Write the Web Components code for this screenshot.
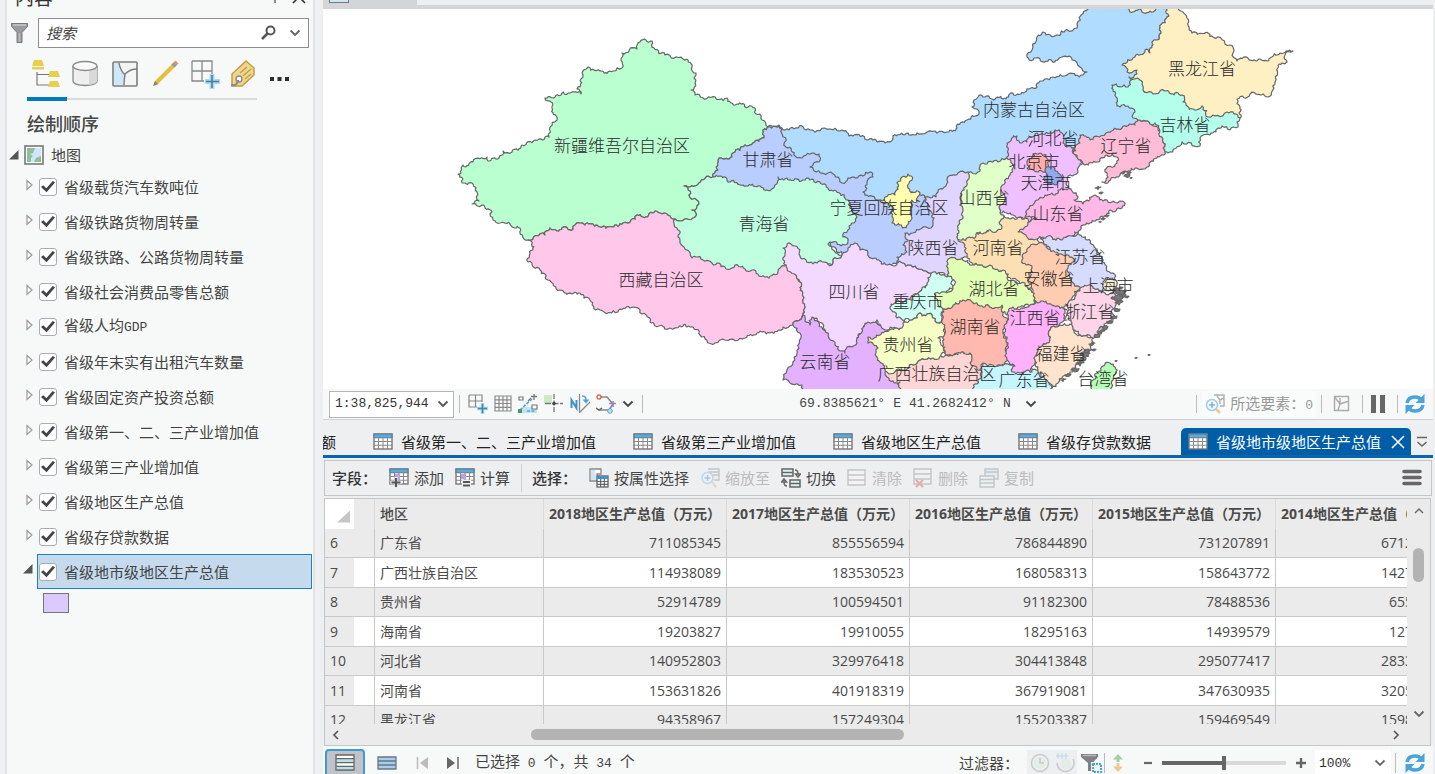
<!DOCTYPE html>
<html lang="zh-CN">
<head>
<meta charset="utf-8">
<title>省级地市级地区生产总值</title>
<style>
html,body{margin:0;height:100%;overflow:hidden;background:#eeeff1}
body{font-family:"Noto Sans CJK SC","Noto Sans",sans-serif;font-size:15px;line-height:20px;color:#444}
</style>
</head>
<body>
<gis-app></gis-app>
<script>
const BASE = `
*{box-sizing:border-box}
button{font:inherit;color:inherit;background:none;border:0;padding:0;margin:0;display:inline-flex;align-items:center;justify-content:center}
input,select{font:inherit;color:inherit;margin:0}
.mono{font-family:"Liberation Mono","Noto Sans CJK SC",monospace;font-size:13px;white-space:pre}
`;
function define(name, css, html, after) {
  const tpl = document.createElement('template');
  tpl.innerHTML = `<style>${BASE}${css}</style>${typeof html === 'string' ? html : ''}`;
  customElements.define(name, class extends HTMLElement {
    connectedCallback() {
      if (this.shadowRoot) return;
      const root = this.attachShadow({ mode: 'open' });
      root.append(tpl.content.cloneNode(true));
      if (typeof html === 'function') root.innerHTML += html(this);
      if (after) after(this, root);
    }
  });
}

/* ---------- icons ---------- */
const grid = (x, y, w, h, extra = '') => `
<rect x="${x}" y="${y}" width="${w}" height="${h}" fill="#fff" stroke="#777" stroke-width="1.4"/>
<rect x="${x}" y="${y}" width="${w}" height="${h / 4}" fill="#5fa8d8" stroke="#5b7d94"/>
<path d="M${x + w / 4} ${y + h / 4}v${h * .75}M${x + w / 2} ${y + h / 4}v${h * .75}M${x + w * .75} ${y + h / 4}v${h * .75}M${x} ${y + h / 2}h${w}M${x} ${y + h * .75}h${w}" stroke="#888" fill="none"/>${extra}`;
const refresh = `<g fill="none" stroke="#4ba3dc" stroke-width="3.6"><path d="M2 9c1-5 5-6 8-6 3 0 5 1 6 3"/><path d="M18 11c-1 5-5 6-8 6-3 0-5-1-6-3"/></g><path d="M19.500 0v9h-9zM.5 20v-9h9z" fill="#4ba3dc"/>`;
const ICONS = {
  funnel: [20, 22, `<path d="M1.500 1.500h16v3l-5.500 6v10h-5v-10l-5.500-6z" fill="#9a9a9f" stroke="#77777c"/><path d="M3 3h13" stroke="#c9c9cd" stroke-width="1.500"/><path d="M9.500 11v9" stroke="#bdbdc2" stroke-width="1.500"/>`],
  search: [16, 16, `<circle cx="9.500" cy="5.500" r="4" fill="none" stroke="#555" stroke-width="2"/><path d="M6.500 8.500L1 14" stroke="#555" stroke-width="2.600"/>`],
  chevron: [12, 8, `<path d="M1.500 1.500L6 6l4.500-4.500" fill="none" stroke="currentColor" stroke-width="1.800"/>`],
  up: [12, 8, `<path d="M2 6l4-4 4 4" fill="none" stroke="#666" stroke-width="1.400"/>`],
  left: [8, 12, `<path d="M6 2L2 6l4 4" fill="none" stroke="#555" stroke-width="1.600"/>`],
  right: [8, 12, `<path d="M2 2l4 4-4 4" fill="none" stroke="#555" stroke-width="1.600"/>`],
  pin: [10, 14, `<path d="M1 8h8M5 8v5M3 1v7M7 1v7" stroke="#666" stroke-width="1.500"/>`],
  close: [14, 14, `<path d="M1 1l12 12M13 1L1 13" stroke="currentColor" stroke-width="1.600"/>`],
  order: [30, 30, `<path d="M7 13v13h14M7 15.500h14" fill="none" stroke="#777" stroke-width="1.200"/><path d="M4 1h8l2 6H2zM2 8h12v2.500H2z" fill="#e8cf4e"/><path d="M20 12h8l2 6H18zM20 22h8l2 6H18z" fill="#e8cf4e"/>`],
  source: [30, 30, `<path d="M3 7v15c0 6 24 6 24 0V7" fill="#eee" stroke="#8a8a8a" stroke-width="1.300"/><path d="M19 11v15c5-1 8-2 8-4V7c0 2-3 3-8 4z" fill="#d8d8d8"/><ellipse cx="15" cy="7" rx="12" ry="4.500" fill="#fafafa" stroke="#8a8a8a" stroke-width="1.300"/>`],
  select: [30, 30, `<rect x="3" y="3" width="24" height="24" rx="1" fill="#f4f4f4" stroke="#7c7c7c" stroke-width="1.600"/><path d="M4 4h5c1 6 3 9 6 12-1 4-1 6-1 10H4z" fill="#cfe8f8"/><path d="M9 4c1 6 3 9 6 12-1 4-1 6-1 10M15 15c4-4 7-5 12-5" fill="none" stroke="#7c7c7c" stroke-width="1.400"/>`],
  pencil: [30, 30, `<path d="M5 22L23 4l3 3L8 25l-5 2z" fill="#e3c03d"/><path d="M3 27l2-5 3 3z" fill="#8a8070"/><path d="M21.500 5.500l3 3 2.500-2.500-3-3z" fill="#999"/><path d="M23.500 3.500l2-2 3 3-2 2z" fill="#e58f80"/>`],
  snap: [30, 30, `<path d="M2 2h20v12M2 2v20h12M12 2v20M2 12h20v4" fill="none" stroke="#888" stroke-width="1.300"/><path d="M22 15v15M15 22.500h15" stroke="#a9d9f2" stroke-width="5"/><path d="M22 16v13M16 22.500h13" stroke="#4c7d99" stroke-width="1.600"/>`],
  tag: [26, 30, `<path d="M2 15L16 2l8 7v7L12 27H2z" fill="#f0d68a" stroke="#c29c46" stroke-width="1.500"/><path d="M10 14l7-6M13 17l8-7M15 20l6-5" stroke="#c29c46" stroke-width="1.200"/><circle cx="9" cy="20" r="3" fill="#fff" stroke="#8a8a8a" stroke-width="1.400"/><path d="M8 21c0 4-3 6-7 5" fill="none" stroke="#8a8a8a" stroke-width="2"/>`],
  dots: [22, 6, `<path d="M1 1h4v4H1zM8.500 1h4v4h-4zM16 1h4v4h-4z" fill="#2c2c2c"/>`],
  map: [20, 20, `<rect x="1" y="1" width="18" height="18" fill="#fff" stroke="#777" stroke-width="1.600"/><rect x="3" y="3" width="14" height="14" fill="#8fbf96"/><path d="M11 3h6v8l-5 2-2 4H7v-4l2-2-3-2 3-1z" fill="#cfe6f7"/>`],
  openArrow: [8, 12, `<path d="M1 1.500L6 6 1 10.500z" fill="#fff" stroke="#999" stroke-width="1.200"/>`],
  downArrow: [10, 10, `<path d="M9.500 0v9.500H0z" fill="#555"/>`],
  table: [20, 18, grid(1, 1, 18, 15)],
  tableAdd: [20, 20, grid(1, 1, 18, 15, `<rect x="6" y="6" width="5" height="6" fill="#b9a3dc"/><path d="M7 9v11M1.500 14.500h11" stroke="#eeeff1" stroke-width="3.600"/><path d="M7 10v9M2.500 14.500h9" stroke="#555" stroke-width="2.200"/>`)],
  tableCalc: [20, 20, grid(1, 1, 18, 15, `<rect x="6" y="6" width="5" height="5" fill="#b9a3dc"/><path d="M7 12h9v7H7z" fill="#eeeff1"/><path d="M8 14h7M8 17.500h7" stroke="#555" stroke-width="1.800"/>`)],
  byAttr: [20, 20, `<path d="M1 1h11v5H8v7H1z" fill="#fff" stroke="#888" stroke-width="1.300"/><path d="M2 2h4c0 4 1 5 2 6v4H2z" fill="#cfe6f5"/><rect x="8" y="8" width="11" height="11" fill="#fff" stroke="#555" stroke-width="1.200"/><path d="M8 9.500h11" stroke="#3f93cc" stroke-width="3"/><path d="M11.600 11v8M15.300 11v8M8 13.500h11M8 16.300h11" stroke="#666" stroke-width="1.200"/>`],
  zoomTo: [20, 20, `<path d="M8 1h11v11h-5M8 4h11M10 7h9" fill="none" stroke="#888" stroke-width="1.400"/><circle cx="7.500" cy="10" r="5.500" fill="#eef6fb" stroke="#74b6de" stroke-width="1.500"/><path d="M7.500 7v6M4.500 10h6" stroke="#3c8fc8" stroke-width="1.500"/><path d="M12 14l4 5" stroke="#d9b98a" stroke-width="2.500"/>`],
  zoomSel: [20, 20, `<path d="M9 1h10v11h-4M12 2l3 4 4-2M15 6v4" fill="none" stroke="#888" stroke-width="1.400"/><circle cx="7" cy="11" r="5.500" fill="#eef6fb" stroke="#74b6de" stroke-width="1.500"/><path d="M7 8v6M4 11h6" stroke="#3c8fc8" stroke-width="1.500"/><path d="M11 15l4 4" stroke="#d9b06a" stroke-width="2.500"/>`],
  swap: [20, 20, `<path d="M1 1h11v7H1zM1 4.500h11M9 12h10v7H9zM9 15.500h10" fill="#dff1f6" stroke="#666" stroke-width="1.500"/><path d="M14 2c3 0 3 2 3 4M14.500 6l2.500 3 2.500-3zM6 18c-3 0-3-2-3-4M.5 14L3 11l2.500 3z" fill="none" stroke="#666" stroke-width="1.500"/>`],
  clear: [20, 18, `<path d="M1 1h17v15H1zM1 6h17M1 11h17" fill="#fafafa" stroke="#888" stroke-width="1.400"/>`],
  del: [20, 20, `<path d="M1 1h17v15H1zM1 6h17M1 11h17" fill="#eef6fa" stroke="#888" stroke-width="1.400"/><path d="M3 12l7 7M10 12l-7 7" stroke="#d5502f" stroke-width="2.200"/>`],
  copy: [20, 20, `<path d="M6 1h13v10H6zM6 4h13" fill="#cfeaf5" stroke="#888" stroke-width="1.400"/><path d="M1 8h14v11H1zM1 11.500h14M1 15h14" fill="#e6f4f9" stroke="#888" stroke-width="1.400"/>`],
  menu: [20, 18, `<path d="M2 2.500h16M2 8.500h16M2 14.500h16" stroke="#666" stroke-width="3.600" stroke-linecap="round"/>`],
  tabMenu: [12, 12, `<path d="M1 1.500h10M1.500 6L6 10l4.500-4" fill="none" stroke="#666" stroke-width="1.500"/>`],
  snapAdd: [20, 20, `<path d="M1 1h13v7M1 1v12h8M7.500 1v12M1 7h13" fill="none" stroke="#888" stroke-width="1.200"/><path d="M14.500 9v11M9 14.500h11" stroke="#a8d6ef" stroke-width="3.500"/><path d="M14.500 10v9M10 14.500h9" stroke="#4586ad" stroke-width="1.600"/>`],
  grid: [18, 18, `<path d="M1 1h16v15H1zM5 1v15M9 1v15M13 1v15M1 4.800h16M1 8.500h16M1 12.300h16" fill="none" stroke="#8b8b8b" stroke-width="1.200"/>`],
  correct: [20, 20, `<path d="M4 13h15v6H2z" fill="#bfe4f7"/><path d="M2 16L14 5M9 17h8" stroke="#4ba3dc" stroke-width="1.600" stroke-dasharray="3 1.500"/><path d="M1 3h4v3H1zM14 11h5v4h-5z" fill="#fff" stroke="#777" stroke-width="1.200"/><path d="M13 2.500h6M16 0v6M10 7l3-3" fill="none" stroke="#777" stroke-width="1.300"/><rect x="0" y="15" width="4" height="4" fill="#4c9a5d"/>`],
  cross: [20, 20, `<rect x="0" y="1" width="8" height="8" fill="#cfe8c8"/><path d="M10 0v19" stroke="#777" stroke-width="1.300" stroke-dasharray="5 1.500"/><path d="M1 9.500h18" stroke="#777" stroke-width="1.300" stroke-dasharray="6 1.500"/><circle cx="10" cy="9.500" r="1.700" fill="#444"/>`],
  north: [20, 20, `<path d="M1.500 14V6l5 8V6" fill="none" stroke="#3f93cc" stroke-width="2"/><path d="M9.500 0v19M10 18l10-10" fill="none" stroke="#888" stroke-width="1.300"/><path d="M12 2c4 0 4 2 4 5" fill="none" stroke="#4ba3dc" stroke-width="1.500"/><path d="M12.500 5.500h7l-3.500 4z" fill="#4ba3dc"/>`],
  trace: [20, 20, `<path d="M3 3h8l5 6M17 10l-4 6H3" fill="none" stroke="#888" stroke-width="1.600"/><circle cx="3" cy="3" r="2" fill="#fff" stroke="#d9684e" stroke-width="1.400"/><path d="M17 7v6M13 9.500h7" stroke="#9a7fc0" stroke-width="1.500"/><circle cx="14" cy="17" r="2.300" fill="#bfe4f7" stroke="#4ba3dc"/><path d="M0 14l3 2 3-2" fill="none" stroke="#666" stroke-width="1.500"/>`],
  sel: [18, 18, `<path d="M1.500 1.500h14v14h-14zM2 2c2 4 4 5 5 7l-2 6M7 9l9-3M7 3v5" fill="none" stroke="#aaa" stroke-width="1.400"/>`],
  pause: [16, 18, `<path d="M1 0h5v18H1zM10 0h5v18h-5z" fill="#666"/>`],
  refresh: [20, 20, refresh],
  rowsAll: [20, 18, `<path d="M1 1h18v15H1z" fill="#fff" stroke="#666" stroke-width="1.300"/><path d="M1 4.750h18M1 8.500h18M1 12.300h18" stroke="#666" stroke-width="1.300"/><path d="M2 6.700h16M2 14h16" stroke="#a8e6f2" stroke-width="1.800"/>`],
  rowsSel: [20, 14, `<path d="M1 1h18v12H1z" fill="#a9cfe8" stroke="#678" stroke-width="1.300"/><path d="M1 5h18M1 9h18" stroke="#678" stroke-width="1.300"/>`],
  first: [14, 14, `<path d="M1.500 1v12" stroke="#bbb" stroke-width="1.500"/><path d="M12 1v12L4 7z" fill="#bbb"/>`],
  last: [14, 14, `<path d="M12 1v12" stroke="#666" stroke-width="1.500"/><path d="M1 1v12l8-6z" fill="#666"/>`],
  clock: [20, 20, `<circle cx="10" cy="10" r="8.500" fill="none" stroke="#777" stroke-width="1.500"/><circle cx="10" cy="10" r="6" fill="#cfe8cf"/><path d="M10 5v5h4" fill="none" stroke="#777" stroke-width="1.500"/>`],
  clock2: [20, 20, `<path d="M18 6a8.500 8.500 0 1 1-16 4" fill="none" stroke="#777" stroke-width="1.500"/><circle cx="11" cy="11" r="5.500" fill="#cfe8cf"/><path d="M1 3h12M3 0v6M7 0v6M11 0v6" stroke="#7bb4dc" stroke-width="1.500"/>`],
  extent: [22, 20, `<path d="M0 1h17v3l-5.500 6v8H7v-8L0 4z" fill="#808085"/><path d="M2 2.500h13" stroke="#bbb" stroke-width="1.500"/><path d="M10 9h11v11H10z" fill="#f7f9f8"/><path d="M12 11h8v8h-8z" fill="none" stroke="#4ba3dc" stroke-width="2.200" stroke-dasharray="2 1"/>`],
  updown: [12, 20, `<path d="M6 1l5 5.500H7.500V9h-3V6.500H1z" fill="#a6cfa6"/><path d="M6 19l5-5.500H7.500V10h-3v3.500H1z" fill="#f0c896"/>`],
  minus: [10, 10, `<path d="M1 5h8" stroke="#666" stroke-width="2.200"/>`],
  plus: [12, 12, `<path d="M1 6h10M6 1v10" stroke="#666" stroke-width="2.400"/>`]
};
define('gis-icon', ':host{display:inline-flex;flex:none}svg{display:block}', el => {
  const [w, h, body] = ICONS[el.getAttribute('name')];
  return `<svg width="${w}" height="${h}" viewBox="0 0 ${w} ${h}" aria-hidden="true">${body}</svg>`;
});

/* ---------- contents pane ---------- */
define('layer-item', `
:host{display:block}
.row{display:flex;align-items:center;height:35px;padding-left:19px}
.arrow{width:11px;height:16px;display:flex;align-items:flex-start;flex:none}
label{flex:1;display:flex;align-items:center;gap:7px;height:35px;margin-right:1px;padding-left:1px;border:1px solid transparent}
:host([selected]) .row{padding-left:16px}
:host([selected]) .arrow{width:14px}
:host([selected]) label{background:#c5daed;border-color:#1a83bf}
input{appearance:none;width:18px;height:18px;background:#fff;border:1px solid #a9adb3;border-radius:3px;display:grid;place-items:center}
input:checked::before{content:"";width:14px;height:12px;background:#444;clip-path:polygon(0 55%,16% 40%,38% 64%,84% 4%,100% 16%,40% 98%)}
`, el => `<div class="row"><span class="arrow"><gis-icon name="${el.hasAttribute('selected') ? 'downArrow' : 'openArrow'}"></gis-icon></span>
<label><input type="checkbox" checked><span><slot></slot></span></label></div>`);

define('contents-pane', `
:host{display:block;background:#f7f9f8;border:solid #e1e2e4;border-width:0 2px;overflow:hidden}
header{display:flex;align-items:center;height:20px;margin-top:-13px;padding:0 7px 0 8px;font-size:19px;color:#333}
header h2{font:inherit;margin:0;flex:1}
header button{margin-left:12px}
.search{display:flex;align-items:center;gap:8px;margin:11px 4px 0 3px}
.box{flex:1;display:flex;align-items:center;height:30px;border:1px solid #8d8d8d;background:#fff;padding:0 0 0 7px}
.box input{flex:1;min-width:0;border:0;outline:0;padding:0;background:none;font-style:italic}
.box input::placeholder{color:#444;opacity:1}
.box button{width:26px;height:26px;color:#666}
.tools{display:flex;align-items:center;height:50px;padding:2px 0 0 23px;gap:10px}
.tools button{height:30px}
.tools button:last-child{margin-left:3px;padding-top:10px}
.line{height:4px;margin:-1px 56px 0 20px;display:flex;align-items:center}
.line i{width:40px;height:4px;background:#0078c8}
.line b{flex:1;height:2px;background:#d9dbdb}
h3{font-size:18px;font-weight:500;line-height:24px;margin:10px 0 0 20px;color:#484848}
.map{display:flex;align-items:center;height:34px;margin:3px 0 -3px;padding-left:2px}
.map span{margin-left:7px}
.map gis-icon+gis-icon{margin-left:5px}
.swatch{width:26px;height:20px;background:#dacaff;border:1px solid #777;margin:4px 0 0 36px}
`, `
<header><h2>内容</h2><button aria-label="固定"><gis-icon name="pin"></gis-icon></button><button aria-label="关闭"><gis-icon name="close"></gis-icon></button></header>
<div class="search"><gis-icon name="funnel"></gis-icon><div class="box"><input type="text" placeholder="搜索" aria-label="搜索"><button aria-label="查找"><gis-icon name="search"></gis-icon></button><button aria-label="选项"><gis-icon name="chevron"></gis-icon></button></div></div>
<div class="tools"><button aria-label="按绘制顺序列出"><gis-icon name="order"></gis-icon></button><button aria-label="按数据源列出"><gis-icon name="source"></gis-icon></button><button aria-label="按选择列出"><gis-icon name="select"></gis-icon></button><button aria-label="按编辑列出"><gis-icon name="pencil"></gis-icon></button><button aria-label="按捕捉列出"><gis-icon name="snap"></gis-icon></button><button aria-label="按标注列出"><gis-icon name="tag"></gis-icon></button><button aria-label="更多"><gis-icon name="dots"></gis-icon></button></div>
<div class="line"><i></i><b></b></div>
<h3>绘制顺序</h3>
<div class="map"><gis-icon name="downArrow"></gis-icon><gis-icon name="map"></gis-icon><span>地图</span></div>
<layer-item>省级载货汽车数吨位</layer-item>
<layer-item>省级铁路货物周转量</layer-item>
<layer-item>省级铁路、公路货物周转量</layer-item>
<layer-item>省级社会消费品零售总额</layer-item>
<layer-item>省级人均<span class="mono">GDP</span></layer-item>
<layer-item>省级年末实有出租汽车数量</layer-item>
<layer-item>省级固定资产投资总额</layer-item>
<layer-item>省级第一、二、三产业增加值</layer-item>
<layer-item>省级第三产业增加值</layer-item>
<layer-item>省级地区生产总值</layer-item>
<layer-item>省级存贷款数据</layer-item>
<layer-item selected>省级地市级地区生产总值</layer-item>
<div class="swatch"></div>`);

/* ---------- map ---------- */
const REGIONS = [
 ['#b0dcff','768,127 782,128 810,130 830,129 840,131 853,136 867,140 878,142 885,143 893,138 917,133 927,132 947,132 957,128 967,120 979,114 972,107 974,100 978,97 985,97 992,99 1003,99 1013,93 1025,92 1037,87 1040,81 1045,79 1053,77 1068,74 1083,75 1087,72 1080,67 1072,60 1062,57 1052,61 1040,59 1033,60 1027,57 1032,50 1043,32 1058,35 1077,28 1077,24 1088,9 1092,2 1175,2 1169,16 1160,28 1157,40 1160,70 1150,100 1150,125 1100,145 1070,150 1020,162 990,180 940,215 880,210 842,190 800,170 775,150'],
 ['#baffd0','458,174 463,165 473,162 487,157 488,161 499,158 503,151 512,152 522,145 549,137 550,127 557,120 552,108 551,102 545,98 570,93 581,94 577,89 583,75 588,67 602,71 613,71 622,68 622,53 637,49 640,42 652,41 654,48 665,55 683,59 692,67 696,73 695,83 691,90 695,95 727,98 748,107 755,108 762,120 768,127 763,130 764,138 753,143 745,145 733,153 732,157 721,158 718,170 713,177 684,186 688,188 689,195 697,200 699,204 692,210 696,213 693,218 675,219 660,213 637,215 623,223 600,227 580,223 573,229 550,228 545,235 528,240 520,228 500,223 493,220 492,212 482,205 472,204 479,201 477,192 473,184 462,183 463,179'],
 ['#ffc8eb','528,240 545,235 550,228 573,229 580,223 600,227 623,223 637,215 660,213 675,219 700,240 765,262 785,258 800,282 803,303 803,315 793,325 783,327 770,333 757,333 745,338 725,340 715,343 700,335 690,327 670,328 650,322 640,310 630,308 618,312 600,310 590,300 580,293 560,290 548,280 540,270 528,262 533,250'],
 ['#bacdff','768,127 782,129 786,147 795,156 812,153 819,154 819,162 810,167 828,173 842,183 848,178 863,176 870,172 873,177 867,183 863,192 875,199 880,200 900,190 920,195 925,197 945,213 945,245 907,262 887,268 860,256 845,255 830,245 835,230 830,205 778,192 740,195 713,177 718,170 721,158 732,157 733,153 745,145 753,143 764,138 763,130'],
 ['#c0ffdf','684,186 713,177 720,176 730,182 743,185 767,190 775,185 778,177 803,180 828,188 848,200 857,217 848,230 843,237 848,241 845,245 830,242 828,244 842,255 833,260 832,265 817,268 802,266 792,254 785,266 778,272 765,277 752,270 725,267 712,263 692,258 680,240 677,228 675,219 693,218 696,213 692,210 699,204 697,200 689,195 688,188'],
 ['#e3b1ff','803,313 812,317 835,340 857,338 868,318 887,325 890,360 900,378 900,394 802,394 802,385 783,380 787,370 797,353 800,333 793,325'],
 ['#f3d9ff','783,248 787,244 795,246 802,259 817,263 832,265 833,260 842,255 848,248 855,243 860,250 868,253 877,260 887,265 897,263 933,272 927,285 913,295 905,305 903,328 887,330 877,320 868,322 862,332 857,343 845,353 835,345 825,330 812,317 810,325 803,315 803,303 800,282 787,268 783,258'],
 ['#cffff3','932,272 953,280 953,288 943,295 943,308 942,320 937,323 932,315 920,313 912,320 897,318 890,307 897,299 913,300 927,285'],
 ['#dfd5ff','968,172 958,173 947,180 938,192 936,197 925,197 928,206 932,213 933,223 931,228 913,233 905,233 908,240 903,245 907,252 897,257 897,263 933,272 947,277 960,262 967,257 972,240 972,180'],
 ['#ffffad','902,177 908,174 912,180 908,188 920,193 917,202 912,200 910,213 911,220 903,228 892,223 890,213 893,207 880,200 895,195 897,183'],
 ['#f0bfff','1007,157 1007,143 1017,136 1020,143 1027,142 1037,133 1050,133 1055,130 1062,133 1063,143 1075,147 1073,153 1083,163 1078,172 1070,175 1066,183 1070,191 1055,198 1027,222 1013,215 1000,213 998,190 1005,175'],
 ['#ffacac','1027,163 1040,153 1050,160 1050,170 1038,172 1028,170'],
 ['#92a8f0','1045,170 1055,168 1058,173 1061,181 1056,185 1048,183'],
 ['#fce0b3','957,237 980,233 995,227 1003,215 1025,218 1035,235 1042,243 1035,290 1020,284 1003,272 980,268 970,262 967,256 962,242'],
 ['#e0ffc9','968,173 978,172 983,163 998,162 1007,158 1013,168 1010,175 1001,187 1005,197 1000,213 1003,215 1002,227 980,232 960,240 957,237 962,213 960,197 965,187'],
 ['#ffb8e7','1018,232 1027,226 1037,218 1025,218 1027,210 1043,198 1055,195 1058,190 1072,191 1078,197 1074,200 1083,204 1093,196 1107,200 1124,202 1122,208 1110,210 1100,217 1090,223 1080,230 1072,237 1062,240 1043,237 1037,239 1027,237'],
 ['#d6dcff','1040,237 1062,240 1072,236 1078,232 1087,240 1095,250 1102,262 1113,273 1115,280 1107,288 1082,290 1065,285 1060,258 1050,248'],
 ['#fecdb1','1028,248 1043,243 1055,252 1063,255 1075,262 1068,268 1072,282 1080,287 1072,298 1070,305 1057,307 1047,305 1035,305 1033,290 1028,280 1032,268 1022,260'],
 ['#e1ffb5','950,258 962,258 972,265 1003,270 1007,278 1025,283 1035,298 1035,303 1020,307 1007,315 980,310 950,310 943,309 938,302 935,293 953,289 954,280 947,275'],
 ['#ffd6d6','885,372 903,370 917,363 933,358 947,355 968,351 985,370 980,394 898,394 900,382 887,377'],
 ['#c5f6ff','982,372 983,363 993,363 1013,365 1030,368 1050,380 1052,388 1045,394 970,394 977,384'],
 ['#ffb9ae','943,309 953,305 963,300 980,306 1002,305 1003,313 1008,320 1003,332 1007,343 1005,362 993,365 983,363 977,370 970,363 970,353 957,353 947,355 943,343 945,330'],
 ['#f5ffc5','920,313 932,315 937,323 945,325 943,337 938,338 945,347 945,353 933,358 917,363 903,370 887,372 880,362 877,357 878,348 868,343 868,337 880,335 902,328 903,323 912,320'],
 ['#ffb2fb','1008,317 1013,307 1030,305 1043,301 1063,308 1067,320 1050,330 1047,343 1037,353 1032,372 1020,373 1012,372 1015,366 1007,360 1008,343 1003,333'],
 ['#fcd6e8','1082,287 1093,288 1102,292 1118,297 1115,307 1113,320 1103,327 1095,337 1080,335 1072,323 1067,313 1072,300'],
 ['#ffe3cc','1050,330 1070,324 1080,335 1093,338 1090,350 1082,360 1070,372 1058,383 1052,388 1047,380 1038,370 1035,360 1037,353 1047,343'],
 ['#f5eed5','1104,289 1105,280 1112,278 1117,285 1113,291'],
 ['#ffbcd6','1073,153 1080,143 1080,135 1090,140 1108,132 1122,128 1135,125 1138,120 1152,125 1162,137 1165,152 1147,167 1127,172 1115,178 1102,182 1108,177 1105,172 1117,163 1117,157 1107,155 1097,162 1085,165'],
 ['#fff0c4','1163,5 1169,16 1160,28 1157,40 1152,42 1150,53 1145,50 1135,57 1122,65 1127,72 1137,70 1137,74 1129,77 1131,82 1160,100 1210,122 1240,118 1240,107 1237,99 1250,94 1267,97 1275,82 1282,63 1287,62 1285,55 1293,51 1280,53 1260,59 1237,61 1233,53 1230,45 1213,37 1192,33 1187,18 1178,2'],
 ['#fff0c4','1125,2 1130,12 1153,12 1158,2'],
 ['#b4ffec','1112,85 1128,87 1130,81 1140,80 1143,90 1160,91 1182,95 1183,102 1193,109 1202,106 1208,117 1227,112 1240,118 1238,127 1230,130 1222,126 1213,133 1200,138 1200,146 1182,142 1168,153 1165,152 1162,137 1155,123 1152,125 1138,120 1133,118 1135,112 1128,106 1120,107 1116,97'],
 ['#b4ffb4','1110,363 1115,367 1113,380 1108,394 1088,394 1097,373']
];
const LABELS = [['新疆维吾尔自治区',622,146],['西藏自治区',661,280],['青海省',764,224],['甘肃省',768,160],['内蒙古自治区',1034,110],['黑龙江省',1202,69],['吉林省',1185,125],['辽宁省',1126,146],['河北省',1053,139],['北京市',1034,162],['天津市',1046,183],['山西省',984,198],['山东省',1058,214],['宁夏回族自治区',889,208],['陕西省',933,248],['河南省',998,248],['江苏省',1080,257],['安徽省',1049,279],['上海市',1108,286],['四川省',854,292],['重庆市',918,302],['湖北省',994,289],['浙江省',1089,312],['湖南省',975,327],['江西省',1035,318],['贵州省',908,345],['福建省',1061,354],['云南省',825,362],['广西壮族自治区',937,374],['广东省',1024,380],['台湾省',1103,379]];
const ISLANDS = [[1098,188,3],[1101,193,2],[1123,173,2],[1127,176,3],[1131,178,1],[1129,173,2],[1103,219,2],[1107,216,2],[1100,222,1],[1115,290,4],[1120,293,5],[1117,298,6],[1123,296,3],[1127,297,2],[1119,303,4],[1117,310,3],[1114,317,3],[1110,322,3],[1104,328,4],[1101,332,4],[1097,336,3],[1092,344,3],[1094,350,2],[1088,351,4],[1085,355,5],[1081,360,5],[1080,364,4],[1075,370,4],[1068,375,3],[1063,380,3],[1125,291,2],[1121,288,2],[1136,358,1],[1149,355,1],[1116,361,1]];

/* Breaks a border segment into a deterministic ragged line, so that two neighbours sharing it stay in step. */
function ragged(a, b, out) {
  const len = Math.hypot(b[0] - a[0], b[1] - a[1]);
  if (len < 3) { out.push(b); return; }
  const flip = a[0] > b[0] || (a[0] === b[0] && a[1] > b[1]);
  const p = flip ? b : a, q = flip ? a : b;
  const s = Math.sin(p[0] * 12.9898 + p[1] * 78.233 + q[0] * 37.719 + q[1] * 4.581) * 43758.5453;
  const r = s - Math.floor(s) - .5;
  const d = (r + Math.sign(r) * .3) * Math.min(len * .38, 2.6);
  const m = [(p[0] + q[0]) / 2 - (q[1] - p[1]) / len * d, (p[1] + q[1]) / 2 + (q[0] - p[0]) / len * d];
  ragged(a, m, out); ragged(m, b, out);
}
function border(text) {
  const pts = text.split(' ').map(t => t.split(',').map(Number)), out = [];
  pts.forEach((p, i) => ragged(p, pts[(i + 1) % pts.length], out));
  return 'M' + out.map(p => p[0].toFixed(1) + ' ' + p[1].toFixed(1)).join('L') + 'Z';
}
define('province-map', `
:host{display:block;background:#fff;overflow:hidden}
svg{display:block;width:100%;height:100%}
text{font-size:17px;font-weight:300;fill:#2a2a2a;text-anchor:middle}
path{stroke:#666;stroke-width:1.200;stroke-linejoin:round}
`, () => `<svg viewBox="323 9 1110 380" preserveAspectRatio="xMidYMid slice" role="img" aria-label="中国省级地图">
${REGIONS.map(([c, p]) => `<path fill="${c}" d="${border(p)}"/>`).join('')}
<g fill="#777">${ISLANDS.map(([x, y, r]) => `<path d="${border(`${x - r},${y} ${x},${y - r / 2} ${x + r},${y - r / 3} ${x},${y + r / 2}`)}"/>`).join('')}</g>
${LABELS.map(([t, x, y]) => `<text x="${x}" y="${y + 6}">${t}</text>`).join('')}</svg>`);

define('map-status', `
:host{display:grid;grid-template-columns:1fr auto 1fr;align-items:center;height:31px;background:#f7f9f8;border-bottom:1px solid #cfd1d3;padding:0 8px 0 6px}
.side{display:flex;align-items:center}
.right{justify-content:flex-end}
.scale{position:relative;display:flex;align-items:center}
select{appearance:none;width:125px;height:27px;border:1px solid #b5b5b5;background:#fff;border-radius:0;padding:0 0 0 5px;color:#333}
.scale gis-icon{position:absolute;right:5px;color:#555}
hr{width:1px;height:18px;border:0;background:#b9bbbd;margin:0 5px}
.icons{display:flex;align-items:center;gap:6px;margin:0 3px}
.coord{display:flex;align-items:center;gap:14px;color:#444;margin-right:-82px}
.deg{display:inline-block;width:16px}
.picked{display:flex;align-items:center;gap:5px;background:#fafbfb;color:#999;padding:0 3px;height:26px}
.faint{opacity:.65}
`, `
<div class="side"><label class="scale"><select class="mono" aria-label="比例尺"><option>1:38,825,944</option></select><gis-icon name="chevron"></gis-icon></label><hr>
<div class="icons"><button aria-label="捕捉"><gis-icon name="snapAdd"></gis-icon></button><button aria-label="格网"><gis-icon name="grid"></gis-icon></button><button aria-label="校正"><gis-icon name="correct"></gis-icon></button><button aria-label="约束"><gis-icon name="cross"></gis-icon></button><button aria-label="方向"><gis-icon name="north"></gis-icon></button><button aria-label="追踪"><gis-icon name="trace"></gis-icon></button><button aria-label="更多"><gis-icon name="chevron"></gis-icon></button></div><hr></div>
<div class="coord"><span class="mono">69.8385621<span class="deg">°</span>E 41.2682412<span class="deg">°</span>N</span><gis-icon name="chevron"></gis-icon></div>
<div class="side right"><hr><div class="picked"><gis-icon class="faint" name="zoomSel"></gis-icon><span>所选要素：<span class="mono">0</span></span></div><hr><button aria-label="选择" style="margin:0 6px"><gis-icon name="sel"></gis-icon></button><hr><button aria-label="暂停" style="margin:0 6px 0 2px"><gis-icon name="pause"></gis-icon></button><hr><button aria-label="刷新" style="margin-left:2px"><gis-icon name="refresh"></gis-icon></button></div>`);

/* ---------- attribute table ---------- */
define('tab-item', `
:host{display:flex;flex:none}
button{height:27px;gap:8px;padding:1px 30px 0 7px;color:#222;white-space:nowrap;border-radius:5px 5px 0 0}
:host([plain]) button{padding-left:0}
:host([active]) button{background:#005da8;color:#fff;padding-right:6px}
:host([active]) .x{margin-left:2px}
`, el => `<button role="tab">${el.hasAttribute('plain') ? '' : '<gis-icon name="table"></gis-icon>'}<span><slot></slot></span>${el.hasAttribute('active') ? '<gis-icon class="x" name="close"></gis-icon>' : ''}</button>`);
define('tab-strip', `
:host{display:flex;align-items:flex-end;height:38px;border-bottom:3px solid #0a66ad}
.list{flex:1;min-width:0;overflow:hidden;display:flex;justify-content:flex-end}
.more{width:22px;height:26px}
`, `<div class="list" role="tablist"><slot></slot></div><button class="more" aria-label="所有选项卡"><gis-icon name="tabMenu"></gis-icon></button>`);

define('tool-button', `
:host{display:inline-flex}
button{gap:5px;height:28px;white-space:nowrap;color:#444}
button:disabled{color:#bbb}
button:disabled gis-icon{opacity:.4}
`, el => `<button${el.hasAttribute('disabled') ? ' disabled' : ''}><gis-icon name="${el.getAttribute('icon')}"></gis-icon><span><slot></slot></span></button>`);
define('table-toolbar', `
:host{display:flex;align-items:center;height:36px;margin:2px 1px 2px 1px;border:1px solid #c4c6c8;padding:0 9px 0 7px;gap:11px;color:#444}
b{font-weight:500;width:46px;color:#333}
hr{width:1px;height:28px;border:0;background:#cfd1d3;margin:0 -1px 0 0}
.menu{margin-left:auto}
`, `
<b>字段：</b><tool-button icon="tableAdd">添加</tool-button><tool-button icon="tableCalc">计算</tool-button><hr>
<b>选择：</b><tool-button icon="byAttr">按属性选择</tool-button><tool-button icon="zoomTo" disabled>缩放至</tool-button><tool-button icon="swap">切换</tool-button><tool-button icon="clear" disabled>清除</tool-button><tool-button icon="del" disabled>删除</tool-button><tool-button icon="copy" disabled>复制</tool-button>
<button class="menu" aria-label="菜单"><gis-icon name="menu"></gis-icon></button>`);

const YEARS = ['2018', '2017', '2016', '2015', '2014'];
const ROWS = [
 [6,'广东省','711085345','855556594','786844890','731207891','671208846'],
 [7,'广西壮族自治区','114938089','183530523','168058313','158643772','142765000'],
 [8,'贵州省','52914789','100594501','91182300','78488536','65568000'],
 [9,'海南省','19203827','19910055','18295163','14939579','12768000'],
 [10,'河北省','140952803','329976418','304413848','295077417','283344000'],
 [11,'河南省','153631826','401918319','367919081','347630935','320566000'],
 [12,'黑龙江省','94358967','157249304','155203387','159469549','159862000']];
define('attribute-table', `
:host{display:grid;grid-template-columns:minmax(0,1fr) 23px;grid-template-rows:225px 21px;margin:0 2px 0 1px;border:1px solid #c4c6c8;background:#ebebeb;height:248px}
.view{overflow:hidden}
table{border-collapse:separate;border-spacing:0;table-layout:fixed;width:1133px;font:14px/20px "Open Sans","Noto Sans CJK SC",sans-serif;color:#4a4a4a}
th,td{padding:0 5px;white-space:nowrap;overflow:hidden;border-right:1px solid #c9c9c9;text-align:right}
thead th{height:30px;font-weight:700;text-align:left;border-right-color:#dadada}
thead th:nth-child(3){font-weight:500}
tbody tr{height:29px}
td,tbody th{border-bottom:1px solid #c9c9c9}
tbody tr:nth-child(even){height:30px}
tbody tr:nth-child(even) td{background:#fff}
tbody th{font-weight:400;text-align:left;border-right:0}
tr>:nth-child(3){text-align:left}
thead .corner{background:#fff;border-right:0}
.corner::after{content:"";display:block;width:13px;height:12px;margin:5px 0 0 7px;background:#c6c6c6;clip-path:polygon(100% 0,100% 100%,0 100%)}
.v{display:flex;flex-direction:column;align-items:center;padding:8px 0 6px;color:#666}
.v i{width:11px;height:34px;border-radius:6px;background:#b3b3b3;margin-top:33px;margin-bottom:auto}
.h{display:flex;align-items:center;padding:0 7px}
.h i{width:373px;height:11px;border-radius:6px;background:#b3b3b3;margin-left:191px;margin-right:auto}
`, () => `<div class="view"><table><colgroup><col style="width:29px"><col style="width:21px"><col style="width:169px">${YEARS.map(() => '<col style="width:183px">').join('')}</colgroup>
<thead><tr><th class="corner"></th><th></th><th>地区</th>${YEARS.map(y => `<th>${y}地区生产总值（万元）</th>`).join('')}</tr></thead>
<tbody>${ROWS.map(([n, ...r]) => `<tr><th>${n}</th><td></td>${r.map(v => `<td>${v}</td>`).join('')}</tr>`).join('')}</tbody></table></div>
<div class="v"><gis-icon name="up"></gis-icon><i></i><gis-icon name="chevron"></gis-icon></div>
<div class="h"><gis-icon name="left"></gis-icon><i></i><gis-icon name="right"></gis-icon></div>`);

define('table-footer', `
:host{display:block;height:29px;overflow:hidden;background:#f7f9f8}
.bar{display:flex;align-items:center;height:33px;padding:0 8px 0 2px}
.on{width:40px;height:28px;background:#c2c3c9;border:2px solid #3d9ad3;border-radius:4px;margin-right:12px}
.nav{margin-left:19px;margin-right:-3px}
.count{margin-left:18px;flex:1}
.off{background:#eeeff1;width:25px;height:26px}
.off gis-icon{opacity:.3}
hr{width:1px;height:20px;border:0;background:#b9bbbd;margin:0 4px}
input{appearance:none;width:124px;height:16px;margin:0 9px;background:linear-gradient(90deg,#666 50%,#d9d9d9 50%) center/100% 4px no-repeat}
input::-webkit-slider-thumb{appearance:none;width:4px;height:14px;background:#666}
.pct{position:relative;display:flex;align-items:center;margin-left:8px;color:#666}
select{appearance:none;width:76px;height:26px;border:0;background:#fff;padding:2px 0 0 4px;color:#333}
.pct gis-icon{position:absolute;right:5px}
`, `<div class="bar"><button class="on" aria-label="显示所有记录"><gis-icon name="rowsAll"></gis-icon></button><button aria-label="显示所选记录"><gis-icon name="rowsSel"></gis-icon></button>
<button class="nav" aria-label="首条"><gis-icon name="first"></gis-icon></button><button class="nav" aria-label="末条"><gis-icon name="last"></gis-icon></button>
<span class="count">已选择<span class="mono"> 0 </span>个，共<span class="mono"> 34 </span>个</span>
<span>过滤器：</span><button class="off" aria-label="时间" style="margin-left:8px"><gis-icon name="clock"></gis-icon></button><button class="off" aria-label="范围"><gis-icon name="clock2"></gis-icon></button><button aria-label="按范围过滤" style="margin-left:4px"><gis-icon name="extent"></gis-icon></button><hr style="margin-left:1px"><button aria-label="高亮" style="margin:0 19px 0 3px"><gis-icon name="updown"></gis-icon></button>
<button aria-label="缩小"><gis-icon name="minus"></gis-icon></button><input type="range" aria-label="缩放" value="50"><button aria-label="放大"><gis-icon name="plus"></gis-icon></button>
<label class="pct"><select class="mono" aria-label="比例"><option>100%</option></select><gis-icon name="chevron"></gis-icon></label><hr><button aria-label="刷新" style="margin-left:5px"><gis-icon name="refresh"></gis-icon></button></div>`);

/* ---------- shell ---------- */
define('gis-app', `
:host{display:grid;grid-template-columns:310px minmax(0,1fr);gap:8px;height:100vh;padding:0 2px 0 5px;overflow:hidden}
main{display:flex;flex-direction:column;min-width:0}
.top{height:9px;display:flex;align-items:flex-start;border-bottom:4px solid #d3d5d7;flex:none;overflow:hidden}
.top div{width:94px;height:5px;background:#d3d5d7;padding-left:6px}
.top i{display:block;width:20px;height:3px;border:solid #777;border-width:0 1px 1px;background:#cfe6f7}
province-map{flex:1;min-height:0}
map-status,tab-strip,table-toolbar,attribute-table,table-footer{flex:none}
`, `<contents-pane></contents-pane>
<main><div class="top"><div><i></i></div></div>
<province-map></province-map><map-status></map-status>
<tab-strip><tab-item plain>额</tab-item><tab-item>省级第一、二、三产业增加值</tab-item><tab-item>省级第三产业增加值</tab-item><tab-item>省级地区生产总值</tab-item><tab-item>省级存贷款数据</tab-item><tab-item active>省级地市级地区生产总值</tab-item></tab-strip>
<table-toolbar></table-toolbar><attribute-table></attribute-table><table-footer></table-footer></main>`);
</script>
</body>
</html>
